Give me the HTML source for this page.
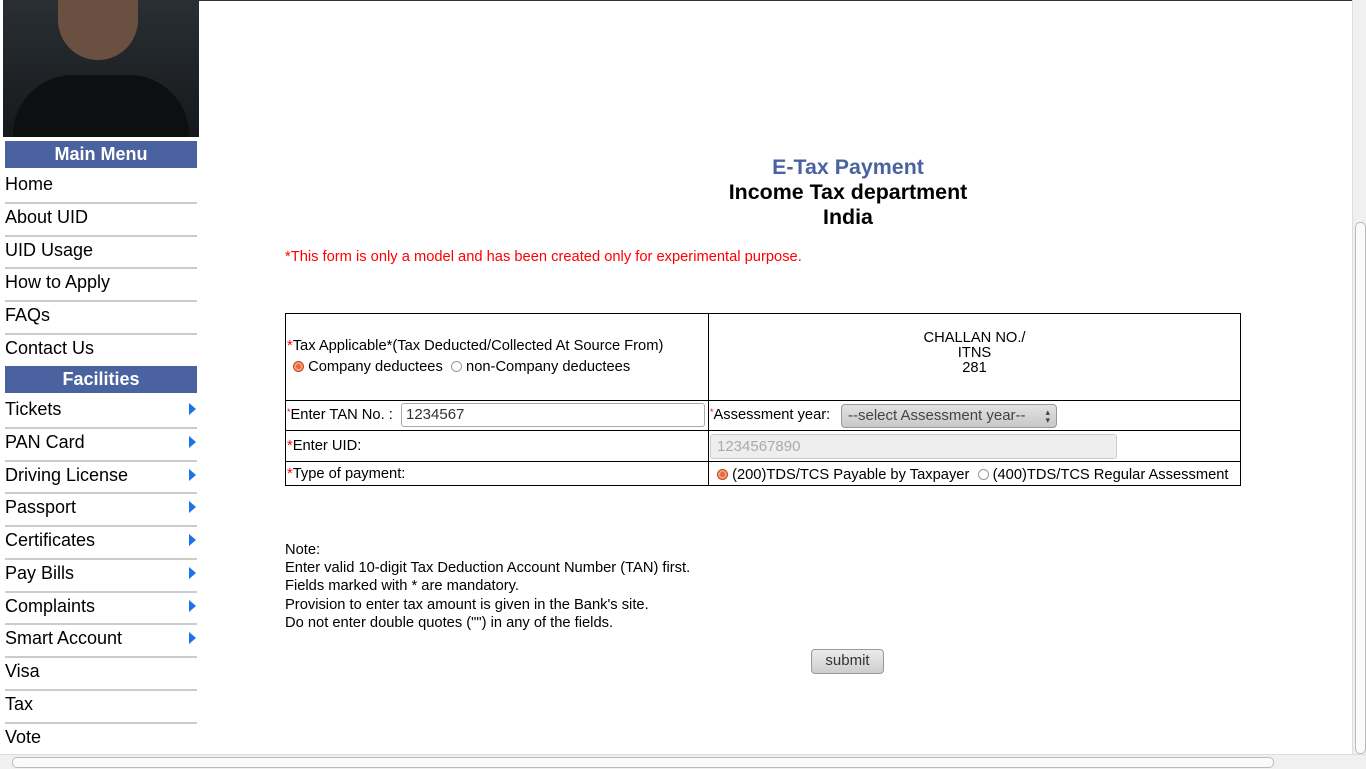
<!DOCTYPE html><html><head><style>
body{margin:0;width:1366px;height:768px;overflow:hidden;background:#fff;font-family:"Liberation Sans",sans-serif;position:relative}
.a{position:absolute}
.side{position:absolute;left:5px;width:192px}
.hd{background:#4a63a0;color:#fff;font-weight:bold;font-size:18px;text-align:center;height:27px;line-height:27px}
.it{height:30.75px;border-bottom:2px solid #ccc;font-size:18px;line-height:26px;color:#000;position:relative}
.it.ar:after{content:"";position:absolute;right:1px;top:7px;border-left:7px solid #1a73e8;border-top:6px solid transparent;border-bottom:6px solid transparent}
.t{font-size:14.7px;color:#000}
.r{color:red}
.rad{display:inline-block;width:11px;height:11px;border-radius:50%;border:1px solid #999;background:#fff;vertical-align:-1px;box-sizing:border-box}
.rad.on{background:#e9683c;border-color:#c04a20;box-shadow:inset 0 0 0 2px #f6a080}
.st{font-size:9px;color:red;vertical-align:top}
</style></head><body>
<div class="a" style="left:199px;top:0;width:1153px;height:1px;background:#333"></div>
<div class="a" style="left:3px;top:0;width:196px;height:137px;background:linear-gradient(#2a2f33,#15191c)"><div class="a" style="left:55px;top:0;width:80px;height:60px;border-radius:0 0 40px 40px;background:#6a5040"></div><div class="a" style="left:10px;top:75px;width:176px;height:62px;background:#0d0f10;border-radius:60px 60px 0 0"></div></div>
<div class="side" style="top:141px"><div class="hd">Main Menu</div>
<div class="it" style="margin-top:3px">Home</div><div class="it">About UID</div><div class="it">UID Usage</div><div class="it">How to Apply</div><div class="it">FAQs</div><div class="it">Contact Us</div></div>
<div class="side" style="top:366px"><div class="hd">Facilities</div>
<div class="it ar" style="margin-top:3px">Tickets</div><div class="it ar">PAN Card</div><div class="it ar">Driving License</div><div class="it ar">Passport</div><div class="it ar">Certificates</div><div class="it ar">Pay Bills</div><div class="it ar">Complaints</div><div class="it ar">Smart Account</div><div class="it">Visa</div><div class="it">Tax</div><div class="it">Vote</div></div>
<div class="a" style="left:548px;top:155px;width:600px;text-align:center;font-size:21.4px;font-weight:bold;line-height:25px"><span style="color:#4a63a0">E-Tax Payment</span><br>Income Tax department<br>India</div>
<div class="a r" style="left:285px;top:249px;font-size:14.7px">*This form is only a model and has been created only for experimental purpose.</div>
<div class="a" style="left:285px;top:313px;width:954px;height:171px;border:1px solid #000"></div>
<div class="a" style="left:708px;top:313px;width:1px;height:173px;background:#000"></div>
<div class="a" style="left:285px;top:400px;width:956px;height:1px;background:#000"></div>
<div class="a" style="left:285px;top:430px;width:956px;height:1px;background:#000"></div>
<div class="a" style="left:285px;top:461px;width:956px;height:1px;background:#000"></div>
<div class="a t" style="left:287px;top:338px"><span class="r">*</span>Tax Applicable*(Tax Deducted/Collected At Source From)</div>
<div class="a t" style="left:293px;top:359px"><span class="rad on"></span> Company deductees &nbsp;<span class="rad"></span> non-Company deductees</div>
<div class="a t" style="left:708px;top:331px;width:533px;text-align:center;line-height:15px">CHALLAN NO./<br>ITNS<br>281</div>
<div class="a t" style="left:287px;top:407px"><span class="st">*</span>Enter TAN No. :</div>
<div class="a" style="left:401px;top:403px;width:304px;height:24px;border:1px solid #aaa;border-radius:3px;box-sizing:border-box;font-size:15px;padding:2px 4px;color:#333">1234567</div>
<div class="a t" style="left:710px;top:407px"><span class="st">*</span>Assessment year:</div>
<div class="a" style="left:841px;top:404px;width:216px;height:24px;border:1px solid #999;border-radius:4px;box-sizing:border-box;background:linear-gradient(#e2e2e2,#c8c8c8);font-size:15px;padding:2px 6px;color:#444">--select Assessment year--<span style="position:absolute;right:6px;top:3px;font-size:9px;line-height:8px">▴<br>▾</span></div>
<div class="a t" style="left:287px;top:438px"><span class="r">*</span>Enter UID:</div>
<div class="a" style="left:710px;top:434px;width:407px;height:25px;border:1px solid #ccc;border-radius:3px;box-sizing:border-box;background:#eee;font-size:15px;padding:3px 6px;color:#aaa">1234567890</div>
<div class="a t" style="left:287px;top:466px"><span class="r">*</span>Type of payment:</div>
<div class="a t" style="left:717px;top:467px"><span class="rad on"></span> (200)TDS/TCS Payable by Taxpayer &nbsp;<span class="rad"></span> (400)TDS/TCS Regular Assessment</div>
<div class="a t" style="left:285px;top:541px;line-height:18.2px">Note:<br>Enter valid 10-digit Tax Deduction Account Number (TAN) first.<br>Fields marked with * are mandatory.<br>Provision to enter tax amount is given in the Bank's site.<br>Do not enter double quotes ("") in any of the fields.</div>
<div class="a" style="left:811px;top:649px;width:73px;height:25px;border:1px solid #999;border-radius:4px;box-sizing:border-box;background:linear-gradient(#ececec,#cdcdcd);font-size:15px;text-align:center;line-height:22px;color:#333">submit</div>
<div class="a" style="left:1352px;top:0;width:14px;height:754px;background:#f0f0f0;border-left:1px solid #ddd"><div class="a" style="left:2px;top:222px;width:9px;height:530px;background:#fafafa;border:1px solid #bbb;border-radius:5px"></div></div>
<div class="a" style="left:0;top:754px;width:1366px;height:14px;background:#f0f0f0;border-top:1px solid #ddd"><div class="a" style="left:12px;top:2px;width:1260px;height:9px;background:#fafafa;border:1px solid #bbb;border-radius:5px"></div></div>
</body></html>
